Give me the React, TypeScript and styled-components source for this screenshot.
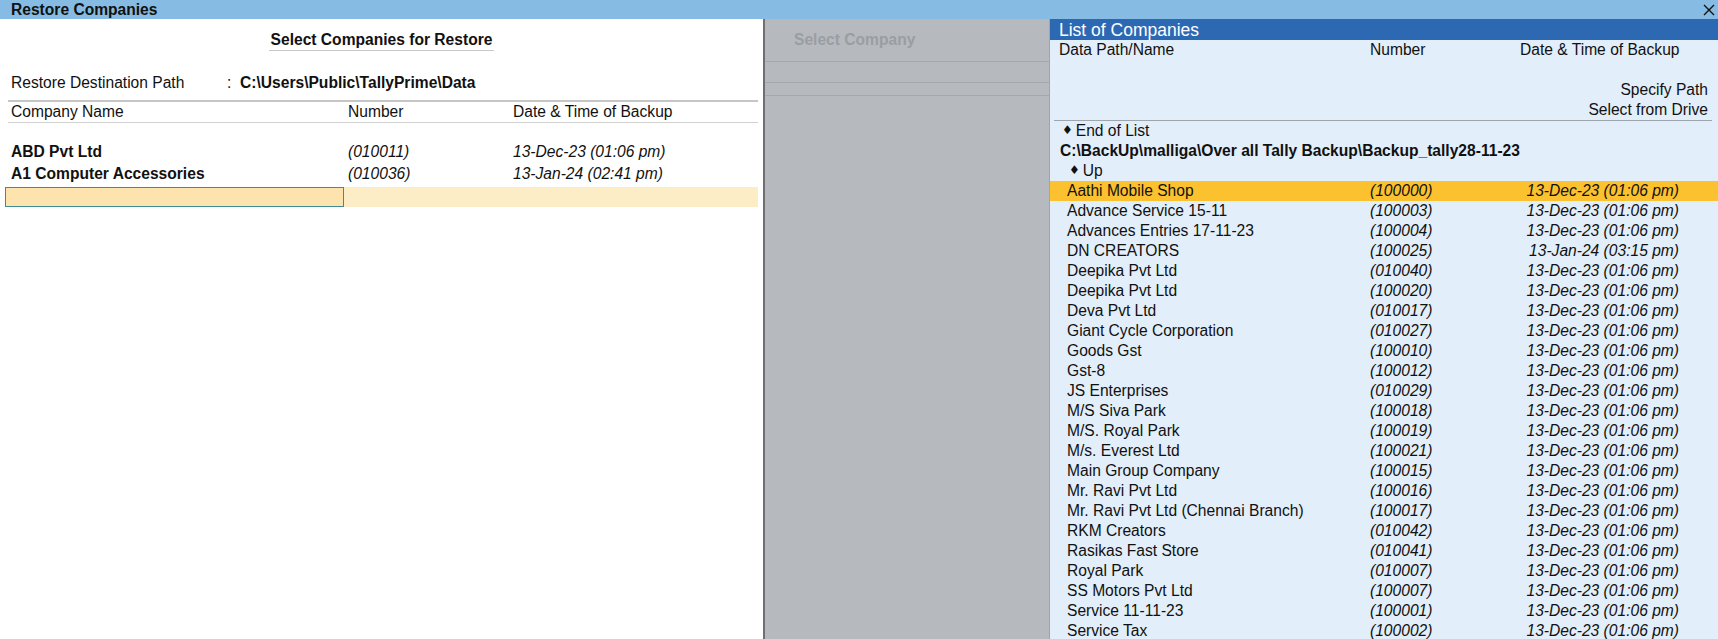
import styled, { createGlobalStyle } from "styled-components";

const GlobalStyle = createGlobalStyle`
  html, body {
    margin: 0;
    padding: 0;
    overflow: hidden;
    background: #ffffff;
  }
  body {
    font-family: "Liberation Sans", Arial, sans-serif;
    font-size: 15.6px;
    color: #111111;
  }
`

const Window = styled.div`
  display: flex;
  flex-direction: column;
  width: 1718px;
  height: 639px;
  overflow: hidden;
`

const TitleBar = styled.div`
  display: flex;
  align-items: center;
  justify-content: space-between;
  height: 19px;
  flex-shrink: 0;
  padding: 0 3px 0 11px;
  background: #86bbe3;
`

const Title = styled.div`
  font-weight: bold;
  font-size: 15.6px;
  line-height: 19px;
`

const Body = styled.div`
  display: flex;
  flex: 1;
  min-height: 0;
`

const LeftPanel = styled.div`
  display: flex;
  flex-direction: column;
  width: 763px;
  flex-shrink: 0;
  background: #ffffff;
`

const Heading = styled.div`
  padding-top: 11px;
  text-align: center;
`

const HeadingText = styled.span`
  display: inline-block;
  padding: 0 2px;
  font-weight: bold;
  line-height: 20px;
  border-bottom: 1px solid #c9c9c9;
`

const DestRow = styled.div`
  display: flex;
  align-items: center;
  height: 20px;
  margin: 22px 0 0 11px;
`

const DestLabel = styled.span`
  width: 216px;
`

const Colon = styled.span`
  width: 13px;
`

const DestPath = styled.span`
  font-weight: bold;
`

const Table = styled.div`
  margin: 7px 5px 0 8px;
  border-top: 2px solid #c6c6c6;
`

const TableRow = styled.div<{ $header?: boolean; $bold?: boolean; $h?: number }>`
  display: grid;
  grid-template-columns: 337px 165px 1fr;
  align-items: center;
  height: ${props => props.$h || 20}px;
  padding-left: 3px;
  font-weight: ${props => props.$bold ? "bold" : "normal"};
  border-bottom: ${props => props.$header ? "1px solid #d2d2d2" : "none"};
`

const Cell = styled.span<{ $italic?: boolean }>`
  font-style: ${props => props.$italic ? "italic" : "normal"};
  font-weight: ${props => props.$italic ? "normal" : "inherit"};
  white-space: nowrap;
`

const CursorRow = styled.div`
  display: grid;
  grid-template-columns: 339px 1fr;
  height: 20px;
  margin: 2px 5px 0 5px;
  background: #fdedc6;
`

const CursorField = styled.div`
  background: #fde3ad;
  border: 1px solid #3f8b98;
`

const MiddlePanel = styled.div`
  display: flex;
  flex-direction: column;
  width: 284px;
  flex-shrink: 0;
  background: #b6babe;
  border-left: 2px solid #6f6f6f;
  border-right: 1px solid #a0a4a8;
`

const MidTitle = styled.div`
  height: 43px;
  padding: 11px 0 0 29px;
  box-sizing: border-box;
  font-weight: bold;
  line-height: 20px;
  color: #9a9ea3;
  border-bottom: 1px solid #a4a8ac;
`

const MidSlot = styled.div<{ $h: number }>`
  height: ${props => props.$h}px;
  border-bottom: 1px solid #a4a8ac;
`

const RightPanel = styled.div`
  display: flex;
  flex-direction: column;
  flex: 1;
  min-width: 0;
  background: #e2eef9;
  overflow: hidden;
`

const ListTitle = styled.div`
  height: 21px;
  flex-shrink: 0;
  padding-left: 9px;
  background: #2d69b3;
  color: #ffffff;
  font-size: 17.5px;
  line-height: 22px;
`

const ListRow = styled.div<{ $highlight?: boolean }>`
  display: grid;
  grid-template-columns: 311px 150px 1fr;
  align-items: center;
  height: 20px;
  flex-shrink: 0;
  padding: 0 39px 0 9px;
  background: ${props => props.$highlight ? "#fcc12f" : "transparent"};
`

const NameCell = styled.span<{ $indent?: number; $bold?: boolean }>`
  padding-left: ${props => props.$indent || 0}px;
  font-weight: ${props => props.$bold ? "bold" : "normal"};
  white-space: nowrap;
`

const NumberCell = styled.span`
  font-style: italic;
`

const DateCell = styled.span<{ $italic?: boolean }>`
  text-align: right;
  font-style: ${props => props.$italic ? "italic" : "normal"};
  white-space: nowrap;
`

const Blank = styled.div`
  height: 20px;
  flex-shrink: 0;
`

const ActionLine = styled.div`
  height: 20px;
  flex-shrink: 0;
  padding-right: 10px;
  line-height: 20px;
  text-align: right;
`

const Divider = styled.div`
  flex-shrink: 0;
  margin: 0 6px 0 4px;
  border-top: 1px solid #9ea5ac;
`

const Marker = styled.span`
  font-size: 12px;
  margin-right: 3px;
  vertical-align: 2px;
  font-family: "DejaVu Sans", sans-serif;
`

type Company = {
  name: string
  number: string
  backup: string
}

const restoreList: Company[] = [
  { name: "ABD Pvt Ltd", number: "(010011)", backup: "13-Dec-23 (01:06 pm)" },
  { name: "A1 Computer Accessories", number: "(010036)", backup: "13-Jan-24 (02:41 pm)" },
]

const DEC = "13-Dec-23 (01:06 pm)"

const backups: Company[] = [
  { name: "Aathi Mobile Shop", number: "(100000)", backup: DEC },
  { name: "Advance Service 15-11", number: "(100003)", backup: DEC },
  { name: "Advances Entries 17-11-23", number: "(100004)", backup: DEC },
  { name: "DN CREATORS", number: "(100025)", backup: "13-Jan-24 (03:15 pm)" },
  { name: "Deepika Pvt Ltd", number: "(010040)", backup: DEC },
  { name: "Deepika Pvt Ltd", number: "(100020)", backup: DEC },
  { name: "Deva Pvt Ltd", number: "(010017)", backup: DEC },
  { name: "Giant Cycle Corporation", number: "(010027)", backup: DEC },
  { name: "Goods Gst", number: "(100010)", backup: DEC },
  { name: "Gst-8", number: "(100012)", backup: DEC },
  { name: "JS Enterprises", number: "(010029)", backup: DEC },
  { name: "M/S Siva Park", number: "(100018)", backup: DEC },
  { name: "M/S. Royal Park", number: "(100019)", backup: DEC },
  { name: "M/s. Everest Ltd", number: "(100021)", backup: DEC },
  { name: "Main Group Company", number: "(100015)", backup: DEC },
  { name: "Mr. Ravi Pvt Ltd", number: "(100016)", backup: DEC },
  { name: "Mr. Ravi Pvt Ltd (Chennai Branch)", number: "(100017)", backup: DEC },
  { name: "RKM Creators", number: "(010042)", backup: DEC },
  { name: "Rasikas Fast Store", number: "(010041)", backup: DEC },
  { name: "Royal Park", number: "(010007)", backup: DEC },
  { name: "SS Motors Pvt Ltd", number: "(100007)", backup: DEC },
  { name: "Service 11-11-23", number: "(100001)", backup: DEC },
  { name: "Service Tax", number: "(100002)", backup: DEC },
]

const CloseIcon = () => (
  <svg width="12" height="12" viewBox="0 0 12 12">
    <path d="M1 1 L11 11 M11 1 L1 11" stroke="#111" strokeWidth="1.4" fill="none" />
  </svg>
)

const App = () => {
  const selected = 0

  return (
    <Window>
      <GlobalStyle />
      <TitleBar>
        <Title>Restore Companies</Title>
        <CloseIcon />
      </TitleBar>
      <Body>
        <LeftPanel>
          <Heading>
            <HeadingText>Select Companies for Restore</HeadingText>
          </Heading>
          <DestRow>
            <DestLabel>Restore Destination Path</DestLabel>
            <Colon>:</Colon>
            <DestPath>C:\Users\Public\TallyPrime\Data</DestPath>
          </DestRow>
          <Table>
            <TableRow $header>
              <Cell>Company Name</Cell>
              <Cell>Number</Cell>
              <Cell>Date &amp; Time of Backup</Cell>
            </TableRow>
            <TableRow $h={18} />
            {restoreList.map((company, index) => (
              <TableRow key={index} $bold $h={22}>
                <Cell>{company.name}</Cell>
                <Cell $italic>{company.number}</Cell>
                <Cell $italic>{company.backup}</Cell>
              </TableRow>
            ))}
          </Table>
          <CursorRow>
            <CursorField />
          </CursorRow>
        </LeftPanel>

        <MiddlePanel>
          <MidTitle>Select Company</MidTitle>
          <MidSlot $h={20} />
          <MidSlot $h={12} />
        </MiddlePanel>

        <RightPanel>
          <ListTitle>List of Companies</ListTitle>
          <ListRow>
            <NameCell>Data Path/Name</NameCell>
            <span>Number</span>
            <DateCell>Date &amp; Time of Backup</DateCell>
          </ListRow>
          <Blank />
          <ActionLine>Specify Path</ActionLine>
          <ActionLine>Select from Drive</ActionLine>
          <Divider />
          <ListRow>
            <NameCell $indent={3}><Marker>♦</Marker>End of List</NameCell>
          </ListRow>
          <ListRow>
            <NameCell $indent={1} $bold>C:\BackUp\malliga\Over all Tally Backup\Backup_tally28-11-23</NameCell>
          </ListRow>
          <ListRow>
            <NameCell $indent={10}><Marker>♦</Marker>Up</NameCell>
          </ListRow>
          {backups.map((company, index) => (
            <ListRow key={index} $highlight={index === selected}>
              <NameCell $indent={8}>{company.name}</NameCell>
              <NumberCell>{company.number}</NumberCell>
              <DateCell $italic>{company.backup}</DateCell>
            </ListRow>
          ))}
        </RightPanel>
      </Body>
    </Window>
  );
}

export default App;
